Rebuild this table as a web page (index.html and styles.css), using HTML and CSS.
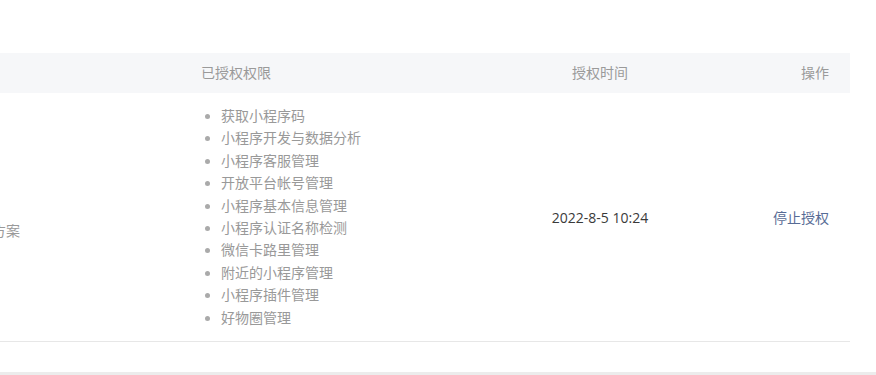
FILE: index.html
```html
<!DOCTYPE html>
<html lang="zh-CN">
<head>
<meta charset="utf-8">
<title>授权管理</title>
<link rel="stylesheet" href="styles.css">
</head>
<body>
<div class="page">
  <div class="table">
    <div class="row head">
      <div class="cell c1"></div>
      <div class="cell c2">已授权权限</div>
      <div class="cell c3">授权时间</div>
      <div class="cell c4">操作</div>
    </div>
    <div class="row body">
      <div class="cell c1"><span class="name">微信小程序第三方平台解决方案</span></div>
      <div class="cell c2">
        <ul class="perms">
          <li>获取小程序码</li>
          <li>小程序开发与数据分析</li>
          <li>小程序客服管理</li>
          <li>开放平台帐号管理</li>
          <li>小程序基本信息管理</li>
          <li>小程序认证名称检测</li>
          <li>微信卡路里管理</li>
          <li>附近的小程序管理</li>
          <li>小程序插件管理</li>
          <li>好物圈管理</li>
        </ul>
      </div>
      <div class="cell c3 time">2022-8-5 10:24</div>
      <div class="cell c4"><a class="stop" href="#">停止授权</a></div>
    </div>
  </div>
  <div class="footer"></div>
</div>
</body>
</html>
```

FILE: styles.css
```css
html, body {
  margin: 0;
  padding: 0;
  background: #fff;
  overflow: hidden;
}
body {
  font-family: "Open Sans", "Noto Sans CJK SC", sans-serif;
  font-size: 14px;
  color: #353535;
}
.page {
  width: 876px;
  height: 375px;
  padding-top: 53px;
  box-sizing: border-box;
  display: flex;
  flex-direction: column;
}
.table {
  margin-left: -200px;
  width: 1050px;
}
.row {
  display: grid;
  grid-template-columns: 381px 319px 200px 150px;
}
.head {
  background: #f6f7f9;
  height: 40px;
  line-height: 40px;
  color: #9a9a9a;
}
.body {
  border-bottom: 1px solid #e7e7e7;
  height: 248px;
  align-items: center;
}
.cell {
  box-sizing: border-box;
  white-space: nowrap;
}
.c1 {
  padding-left: 24px;
  color: #9a9a9a;
}
.c1 .name {
  display: block;
  padding-top: 26px;
}
.c2 { padding-left: 20px; }
.c3 { text-align: center; }
.c4 { text-align: right; padding-right: 21px; }
.perms {
  margin: 0;
  padding: 0 0 0 20px;
  color: #999;
  line-height: 22.4px;
}
.perms li::marker {
  color: #aaa;
  font-size: 13px;
}
.time {
  color: #3a3a3a;
}
.stop {
  color: #576b95;
  text-decoration: none;
}
.footer {
  margin-top: auto;
  height: 3px;
  background: #ececec;
}
```
